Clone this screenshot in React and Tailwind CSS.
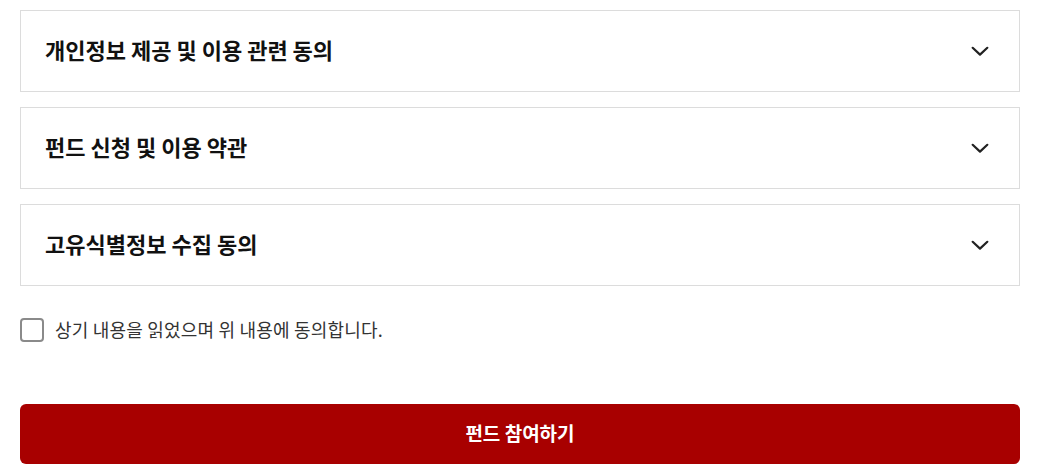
import React from "react";

const font = { fontFamily: '"Noto Sans CJK KR", "Noto Sans", sans-serif' };

function Chevron() {
  return (
    <svg width="22" height="22" viewBox="0 0 24 24" fill="none" stroke="#222" strokeWidth="2.4" strokeLinecap="round" strokeLinejoin="round">
      <path d="M4 8.5l8 7.5 8-7.5" />
    </svg>
  );
}

function Panel({ title }) {
  return (
    <div className="flex h-[82px] items-center justify-between border border-[#dcdcdc] bg-white pl-6 pr-7">
      <span className="pb-[4px] text-[22px] leading-none font-bold text-[#111]">{title}</span>
      <Chevron />
    </div>
  );
}

export default function App() {
  return (
    <div className="min-h-[476px] bg-white pl-5 pr-[19px] pt-[10px]" style={font}>
      <div className="flex flex-col gap-[15px]">
        <Panel title="개인정보 제공 및 이용 관련 동의" />
        <Panel title="펀드 신청 및 이용 약관" />
        <Panel title="고유식별정보 수집 동의" />
      </div>
      <label className="mt-[30px] flex items-center gap-[11px]">
        <span className="block h-[24px] w-[24px] rounded-[4px] border-2 border-[#8a8a8a] bg-white" />
        <span className="text-[18px] text-[#333] tracking-[0.2px]">상기 내용을 읽었으며 위 내용에 동의합니다.</span>
      </label>
      <button className="mt-[61px] flex h-[60px] w-full items-center justify-center rounded-[6px] bg-[#a80000] pb-[3px] text-[19px] leading-none font-bold text-white">
        펀드 참여하기
      </button>
    </div>
  );
}
